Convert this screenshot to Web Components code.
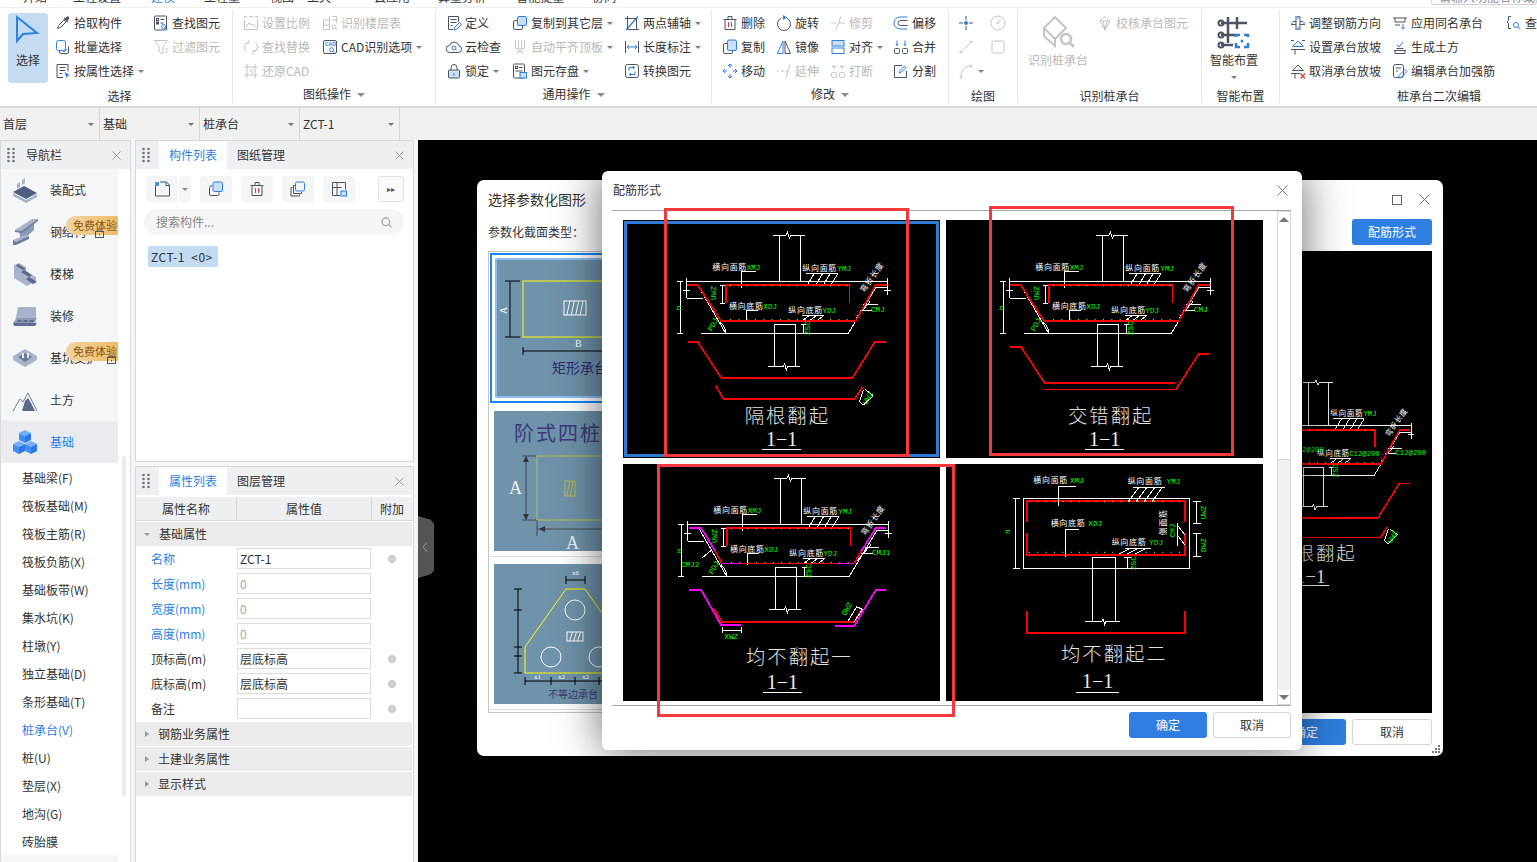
<!DOCTYPE html>
<html lang="zh-CN">
<head>
<meta charset="utf-8">
<title>GTJ</title>
<style>
html,body{margin:0;height:100%;overflow:hidden;background:#fff}
body{font:12px/16px "Noto Sans CJK SC","Liberation Sans",sans-serif;color:#333}
</style>
</head>
<body>
<gtj-app>
  <top-tabs></top-tabs>
  <ribbon-bar>
    <rb-group label="选择" style="--w:233px;--pad:8px;--cols:47px 98px 1fr;--label-w:239px">
      <rb-big icon="select" label="选择" active></rb-big>
      <rb-btn icon="pick" label="拾取构件"></rb-btn>
      <rb-btn icon="batch" label="批量选择"></rb-btn>
      <rb-btn icon="attrsel" label="按属性选择" drop></rb-btn>
      <rb-btn icon="findel" label="查找图元"></rb-btn>
      <rb-btn icon="filter" label="过滤图元" off></rb-btn>
    </rb-group>
    <rb-group label="图纸操作" drop style="--w:203px;--pad:10px;--cols:79px 1fr">
      <rb-btn icon="scale" label="设置比例" off></rb-btn>
      <rb-btn icon="replace" label="查找替换" off></rb-btn>
      <rb-btn icon="restore" label="还原CAD" off></rb-btn>
      <rb-btn icon="floortable" label="识别楼层表" off></rb-btn>
      <rb-btn icon="cadopt" label="CAD识别选项" drop></rb-btn>
    </rb-group>
    <rb-group label="通用操作" drop style="--w:276px;--pad:10px;--cols:66px 112px 1fr">
      <rb-btn icon="define" label="定义"></rb-btn>
      <rb-btn icon="cloud" label="云检查"></rb-btn>
      <rb-btn icon="lock" label="锁定" drop></rb-btn>
      <rb-btn icon="copyfloor" label="复制到其它层" drop></rb-btn>
      <rb-btn icon="autolevel" label="自动平齐顶板" drop off></rb-btn>
      <rb-btn icon="store" label="图元存盘" drop></rb-btn>
      <rb-btn icon="twoaxis" label="两点辅轴" drop></rb-btn>
      <rb-btn icon="dimlen" label="长度标注" drop></rb-btn>
      <rb-btn icon="convert" label="转换图元"></rb-btn>
    </rb-group>
    <rb-group label="修改" drop style="--w:237px;--pad:10px;--cols:54px 54px 63px 1fr">
      <rb-btn icon="del" label="删除"></rb-btn>
      <rb-btn icon="copy" label="复制"></rb-btn>
      <rb-btn icon="move" label="移动"></rb-btn>
      <rb-btn icon="rotate" label="旋转"></rb-btn>
      <rb-btn icon="mirror" label="镜像"></rb-btn>
      <rb-btn icon="extend" label="延伸" off></rb-btn>
      <rb-btn icon="trim" label="修剪" off></rb-btn>
      <rb-btn icon="align" label="对齐" drop></rb-btn>
      <rb-btn icon="brk" label="打断" off></rb-btn>
      <rb-btn icon="offset" label="偏移"></rb-btn>
      <rb-btn icon="merge" label="合并"></rb-btn>
      <rb-btn icon="split" label="分割"></rb-btn>
    </rb-group>
    <rb-group label="绘图" style="--w:69px;--pad:9px;--cols:32px 32px">
      <rb-btn icon="point"></rb-btn>
      <rb-btn icon="line" off></rb-btn>
      <rb-btn icon="arc" drop off></rb-btn>
      <rb-btn icon="gauge" off></rb-btn>
      <rb-btn icon="rect" off></rb-btn>
    </rb-group>
    <rb-group label="识别桩承台" style="--w:184px;--pad:10px;--cols:69px 1fr">
      <rb-big icon="identify" label="识别桩承台" off></rb-big>
      <rb-btn icon="check" label="校核承台图元" off></rb-btn>
    </rb-group>
    <rb-group label="智能布置" style="--w:78px;--pad:2px;--cols:60px">
      <rb-big icon="smart" label="智能布置" drop></rb-big>
    </rb-group>
    <rb-group label="桩承台二次编辑" last style="--w:257px;--pad:10px;--cols:102px 114px 1fr;--label-w:318px">
      <rb-btn icon="adjust" label="调整钢筋方向"></rb-btn>
      <rb-btn icon="slope" label="设置承台放坡"></rb-btn>
      <rb-btn icon="noslope" label="取消承台放坡"></rb-btn>
      <rb-btn icon="same" label="应用同名承台"></rb-btn>
      <rb-btn icon="earth" label="生成土方"></rb-btn>
      <rb-btn icon="patch" label="编辑承台加强筋"></rb-btn>
      <rb-btn icon="view" label="查看"></rb-btn>
    </rb-group>
  </ribbon-bar>
  <select-bar></select-bar>
  <main-area>
    <nav-panel>
      <nav-item icon="assembly" label="装配式"></nav-item>
      <nav-item icon="steel" label="钢结构" badge="29"></nav-item>
      <nav-item icon="stairs" label="楼梯"></nav-item>
      <nav-item icon="finish" label="装修"></nav-item>
      <nav-item icon="pit" label="基坑支护" badge="41"></nav-item>
      <nav-item icon="earthwork" label="土方"></nav-item>
      <nav-item icon="cubes" label="基础" active></nav-item>
      <sub-item>基础梁(F)</sub-item>
      <sub-item>筏板基础(M)</sub-item>
      <sub-item>筏板主筋(R)</sub-item>
      <sub-item>筏板负筋(X)</sub-item>
      <sub-item>基础板带(W)</sub-item>
      <sub-item>集水坑(K)</sub-item>
      <sub-item>柱墩(Y)</sub-item>
      <sub-item>独立基础(D)</sub-item>
      <sub-item>条形基础(T)</sub-item>
      <sub-item active>桩承台(V)</sub-item>
      <sub-item>桩(U)</sub-item>
      <sub-item>垫层(X)</sub-item>
      <sub-item>地沟(G)</sub-item>
      <sub-item>砖胎膜</sub-item>
    </nav-panel>
    <mid-column>
      <list-panel></list-panel>
      <prop-panel>
        <prop-group label="基础属性" open></prop-group>
        <prop-row label="名称" value="ZCT-1" blue dot></prop-row>
        <prop-row label="长度(mm)" value="0" blue dim></prop-row>
        <prop-row label="宽度(mm)" value="0" blue dim></prop-row>
        <prop-row label="高度(mm)" value="0" blue dim></prop-row>
        <prop-row label="顶标高(m)" value="层底标高" dot></prop-row>
        <prop-row label="底标高(m)" value="层底标高" dot></prop-row>
        <prop-row label="备注" value="" dot></prop-row>
        <prop-group label="钢筋业务属性"></prop-group>
        <prop-group label="土建业务属性"></prop-group>
        <prop-group label="显示样式"></prop-group>
      </prop-panel>
    </mid-column>
    <cad-canvas>
      <dock-handle></dock-handle>
      <param-dialog>
        <param-thumb kind="rect" selected></param-thumb>
        <param-thumb kind="step"></param-thumb>
        <param-thumb kind="poly"></param-thumb>
        <cad-drawing slot="preview" kind="1" vals style="width:301px;height:226px"></cad-drawing>
      </param-dialog>
      <rebar-dialog>
        <cad-drawing kind="1" selected></cad-drawing>
        <cad-drawing kind="2"></cad-drawing>
        <cad-drawing kind="3"></cad-drawing>
        <cad-drawing kind="4"></cad-drawing>
        <red-mark slot="mark" style="left:62px;top:37px;width:245px;height:249px"></red-mark>
        <red-mark slot="mark" style="left:387px;top:35px;width:245px;height:250px"></red-mark>
        <red-mark slot="mark" style="left:55px;top:293px;width:298px;height:253px"></red-mark>
      </rebar-dialog>
    </cad-canvas>
  </main-area>
</gtj-app>

<script>
const FONT = '"Noto Sans CJK SC","Liberation Sans",sans-serif';

// toolbar icons, 16x16 unless a vb attribute says otherwise
const ICONS = {
  select: '<path class="b" stroke-width="2" d="M3 2v24l6-7 14-1z"/>',
  pick: '<path d="M2.5 13.5l1-3 5.5-5.5 2 2-5.5 5.5z"/><path class="df" d="M8.5 3.5l4 4 1-1-1-1 1.3-1.3a1.6 1.6 0 0 0-2.3-2.3L10.200 3.200 9.500 2.500z"/>',
  batch: '<rect class="b" x="1.500" y="1.500" width="9" height="10" rx="2"/><path d="M4.500 11.500v1.500a1.500 1.500 0 0 0 1.500 1.500h6a1.500 1.500 0 0 0 1.500-1.500V7.500"/><path class="b" d="M7 11l2 2 3-3"/>',
  attrsel: '<path d="M8 14.500H2V1.500h11v7"/><path d="M4.500 4.500h6M4.500 7.500h6M4.500 10.500h3"/><path class="bf" d="M9.500 9l5.500 3-2.400.7-.9 2.500z"/>',
  findel: '<rect x="1.500" y="1" width="12" height="14" rx="1"/><path d="M7.500 4.500h4M7.500 8h3"/><rect x="3.500" y="3.500" width="2" height="2"/><rect x="3.500" y="7" width="2" height="2"/><circle class="b" cx="10.500" cy="11.500" r="2"/><path class="b" d="M12 13l2.500 2"/>',
  filter: '<path d="M1.500 1.500h13L10 7.500v7l-4-2v-5z"/><path d="M12 10h3M12 13h3"/>',
  scale: '<path d="M1.500 3V1.500H4M6 1.500h4M12 1.500h2.500V3M1.500 5v9.500h13V5"/><path d="M3 12l3-4 2.500 2.500L10 9l3 3"/>',
  floortable: '<path d="M1.500 5h6V1.500M1.500 10h6M7.500 5v9.500h-6V5M10.500 1.500h4V8M10.500 5h4"/><circle cx="12" cy="12" r="2"/><path d="M13.500 13.500l1.500 1.500"/>',
  replace: '<path d="M4 3.200a6 6 0 0 0-.5 9.300M12 12.800a6 6 0 0 0 .5-9.300"/><path d="M6 .8v3.600H2.500M10 15.200v-3.600h3.500"/>',
  cadopt: '<rect x="1.500" y="1.500" width="13" height="13" rx="1.500"/><text class="bf" x="3" y="7" font-size="5" font-family="Liberation Sans" font-weight="700">CAD</text><circle class="b" cx="9.500" cy="10.800" r="2"/><path class="b" d="M11 12.300l1.500 1.500"/>',
  restore: '<path d="M1 4h14M1 12h14M4 1v14M12 1v14"/><path d="M10 6L7 8l3 2"/>',
  define: '<path d="M12.500 7V1.500h-10v13H7"/><path d="M4.500 4.500h6M4.500 7.500h6M4.500 10.500h2"/><path class="b" d="M8 15l.5-2.500 5-5 2 2-5 5z"/>',
  cloud: '<path d="M4 13.500a3.500 3.500 0 0 1-.6-7A5 5 0 0 1 13 6.800a3.400 3.400 0 0 1-1 6.700z"/><circle class="b" cx="8" cy="9" r="2"/><path class="b" d="M9.500 10.500l1 1"/>',
  lock: '<rect class="lf" x="2.500" y="7" width="11" height="8" rx="1"/><path d="M5 7V4.500a3 3 0 0 1 6 0V7"/><path class="b" d="M8 10v2.500"/>',
  copyfloor: '<rect class="b lf" x="5.500" y="1.500" width="9" height="9" rx="1.500"/><path d="M5 5.500H3A1.500 1.500 0 0 0 1.500 7v6A1.500 1.500 0 0 0 3 14.500h6a1.500 1.500 0 0 0 1.500-1.500v-2"/>',
  autolevel: '<path d="M3.500 1.500v8h3v-8M9.500 1.500v8h3v-8"/><path d="M5 14.500L8 9.500l3 5M6 13h4"/>',
  store: '<rect x="1.500" y="1" width="11" height="14" rx="1"/><rect x="3.500" y="3.500" width="2" height="2"/><path d="M7 4.500h3.500M3.500 8h7"/><rect class="b lf" x="8" y="9.500" width="6.500" height="5.500"/>',
  twoaxis: '<path class="b" stroke-width="1.300" d="M2 15L14 1.500"/><path d="M3.500 1v13.500H15M1 3.500h11.500V15"/>',
  dimlen: '<path d="M1.500 2v12M14.500 2v12"/><path class="b" d="M3 8h10M5 6L3 8l2 2M11 6l2 2-2 2"/>',
  convert: '<rect x="1.500" y="1.500" width="13" height="13" rx="2"/><path class="b" d="M5 7.500V4.500h5.500M9 3l1.500 1.500L9 6M11 8.500v3H5.500M7 10L5.500 11.500 7 13"/>',
  del: '<path d="M3 4.500h10v10H3zM1.500 4.500h13M6 4.500V1.500h4v3"/><path class="r" d="M6.500 7v5M9.500 7v5"/>',
  rotate: '<path d="M10.500 3A6.500 6.500 0 1 1 5.500 3"/><path class="bf" d="M7 0l4 2.500L7 5z"/>',
  trim: '<path d="M1 8h5M8 8h7M11 1.500L6 14.500"/>',
  offset: '<path class="b" d="M14.500 2H7a6 6 0 0 0 0 12h7.500"/><path d="M14.500 5.500H7.500a2.500 2.500 0 0 0 0 5h7"/>',
  copy: '<rect class="b lf" x="5.500" y="1" width="9" height="10.500" rx="1.500"/><path d="M5 4.500H3A1.500 1.500 0 0 0 1.500 6v7A1.500 1.500 0 0 0 3 14.500h6a1.500 1.500 0 0 0 1.500-1.500v-1"/>',
  mirror: '<path class="b" d="M1.500 14.500L7 2v12.500z"/><path d="M9 14.500V2l5.500 12.500z"/>',
  align: '<rect class="b lf" x="2" y="1.500" width="12" height="5.500"/><rect class="b" x="2" y="9" width="12" height="5.500"/>',
  merge: '<rect x="1.500" y="9.500" width="5" height="5" rx="1"/><rect x="9.500" y="9.500" width="5" height="5" rx="1"/><path class="b" d="M4 1.500v5M2.800 5L4 6.500 5.200 5M12 1.500v5M10.800 5l1.200 1.500L13.200 5"/>',
  move: '<path class="b" d="M8 1v4M8 11v4M1 8h4M11 8h4M6 3l2-2 2 2M6 13l2 2 2-2M3 6L1 8l2 2M13 6l2 2-2 2"/>',
  extend: '<path d="M1 8h2M5 8h3M10 8h2M14 1.500L10 14.500"/>',
  brk: '<rect x="1.500" y="9.500" width="5" height="5" rx="1"/><rect x="9.500" y="9.500" width="5" height="5" rx="1"/><path d="M4 2v4M2 3.500h4M12 2v4M10 3.500h4"/>',
  split: '<path d="M9 2.500H1.500v12h12V8"/><path class="b" d="M6.500 10l.5-2.500L11.500 3 13 4.500 8.500 9z"/>',
  point: '<path d="M8 1v4M8 11v4M1 8h4M11 8h4"/><circle class="bf" cx="8" cy="8" r="2"/>',
  gauge: '<circle cx="8" cy="8" r="7"/><path d="M8 8l3-4"/><circle cx="8" cy="8" r=".8"/>',
  line: '<path d="M3 13L13 3"/><circle cx="2.800" cy="13.200" r="1"/><circle cx="13.200" cy="2.800" r="1"/>',
  rect: '<rect x="2" y="2" width="12" height="12" rx="1.500"/>',
  arc: '<path d="M3 14C3 7 7 3 13 3"/><circle cx="3" cy="14" r="1"/><circle cx="13" cy="3" r="1"/>',
  check: '<path d="M8 1.500l5 4.500-5 9-5-9zM3 6h10M6 6l2 9 2-9"/>',
  identify: '<path d="M14 2l11 11-11 11L3 13z" stroke-width="2"/><path d="M3 13v8l11 10v-7M14 31V24" stroke-width="2"/><circle cx="25" cy="24" r="5" stroke-width="2.500"/><path d="M29 28l4 4" stroke-width="2.500"/>',
  smart: '<path d="M4 8h26M4 20h14M11 2v26M20 2v12M4 30h12" stroke-width="2.500"/><circle cx="4" cy="8" r="2.500" stroke-width="2"/><circle cx="4" cy="20" r="2.500" stroke-width="2"/><circle cx="4" cy="30" r="2.500" stroke-width="2"/><path class="b" stroke-width="2.500" d="M19 22v-2h4M27 20h4v2M31 28v4h-4M23 32h-4v-4"/><circle class="bf" cx="25" cy="26" r="1.500"/>',
  adjust: '<path d="M3 6.500h3M10 6.500h3M1 9.500h5M10 9.500h5M6 1v14M10 1v14"/><path class="b" d="M8 1v3M6.500 2.500L8 1l1.500 1.500M8 15v-3M6.500 13.500L8 15l1.500-1.500M1 8h2M13 8h2"/>',
  slope: '<path class="b" d="M8 2l5.500 5.500h-11z"/><path d="M1 10.500h14M1 1.500h3M12 1.500h3M5 10.500v5"/>',
  noslope: '<path d="M8 2l5.500 5.500h-11zM1 10.500h9M5 10.500v5"/><path class="r" stroke-width="1.300" d="M10.500 10.500l4.500 5M15 10.500l-4.500 5"/>',
  same: '<path d="M1 3h14M3 3v4h10V3M3 10h5"/><path class="b" d="M11 9v5M9.500 12.500L11 14l1.500-1.500"/>',
  earth: '<path class="b" d="M5 6l2 2 4-5"/><path d="M2 11.500h12M3 11.500v3h10v-3M4.500 9.500h7"/>',
  patch: '<rect x="1.500" y="1.500" width="10" height="13" rx="2"/><path d="M4 5h5M4 8h2"/><path class="b" d="M6.500 15l.5-2.500 6-6 2 2-6 6z"/>',
  view: '<path d="M5 1.500H2.500v4L1 7l1.500 1.500v5H5"/><circle class="b" cx="10" cy="10" r="2.500"/><path class="b" d="M12 12l2 2.500"/>',
  newdoc: '<path d="M1.500 5v10h14V4l-3-3H6"/><path class="bf" d="M1 1h4v4H1z" opacity=".85"/><path d="M12 1v3.500h3.500"/>',
  dup: '<rect class="b lf" x="5" y="1" width="9.500" height="9.500" rx="1.500"/><path d="M4.500 5H3A1.500 1.500 0 0 0 1.500 6.500V13A1.500 1.500 0 0 0 3 14.500h6.500A1.500 1.500 0 0 0 11 13v-1.500"/>',
  dupmany: '<rect class="b" x="5.500" y="1" width="9" height="9" rx="1.500"/><path d="M5 4.500H3.500v8h8V11M2.500 6.500H1v8.500h8.500V13.500"/>',
  savetpl: '<path d="M1.500 1.500h13v7M1.500 1.500v13H9M1.500 6.500h9M6 1.500v13"/><rect class="b lf" x="10" y="10" width="5.500" height="5"/>'
};

const NAV = {
  assembly: '<path fill="#a8b3ca" d="M5 7l3-2v5L5 12zM10 3l3-2v5l-3 2z"/><path fill="#a8b3ca" d="M1 16l13 7 11-6v3l-11 6-13-7z"/><path fill="#4d5e80" d="M1 15l11-6 13 7-11 6z"/>',
  steel: '<path fill="#8e9ab5" d="M7 13L22 3v8L12 20l-3 0z"/><path fill="#a8b3ca" d="M3 11L20 0h6L10 12z"/><path fill="#6d7b9a" d="M3 11l7 1v2l-7-1zM10 12L26 0v2L10 14z"/><path fill="#a8b3ca" d="M1 21l12-5 4 1L4 23z"/><path fill="#6d7b9a" d="M1 21l3 2v3H1zM4 23l13-6v3L4 26z"/>',
  stairs: '<path fill="#a8b3ca" d="M2 4l0 13 13 8 9-5v-4L14 10V6L7 2z"/><path fill="#596a8b" d="M6 3l8 5-3 1-7-4zM12 9l8 5-3 2-8-5zM17 16l8 5-4 2-7-5z"/>',
  finish: '<path fill="#a8b3ca" d="M7 4h17v15H3l3-15z"/><path fill="#8d99b4" d="M1 20h21l3-5H5z"/><path fill="#5d6d8e" d="M5 19h4l1-2H6zM11 19h4l1-2h-4zM17 19h4l1-2h-4zM7 23h16l2-3H1l1 3z"/>',
  pit: '<path fill="#a8b3ca" d="M13 4L1 11v4l12 7 12-7v-4z"/><path fill="#6d7b9a" d="M13 8l-7 4 7 5 7-5z"/><path fill="#e8eaf0" d="M10 8h2v5h-2zM15 8h2v5h-2z"/>',
  earthwork: '<path fill="none" stroke="#6d7b9a" d="M1 24L8 12l3 3 5-9 9 18"/><path fill="#59698b" d="M10 24l3-10 3-3 3 5 4 8z"/>',
  cubes: '<g id="c"><path fill="#6fb0ff" d="M13 1l6 3-6 3-6-3z"/><path fill="#3f8ff2" d="M7 4l6 3v7l-6-3z"/><path fill="#2b78e4" d="M19 4l-6 3v7l6-3z"/></g><path fill="#6fb0ff" d="M7 12l6 3-6 3-6-3z"/><path fill="#3f8ff2" d="M1 15l6 3v7l-6-3z"/><path fill="#2b78e4" d="M13 15l-6 3v7l6-3z"/><path fill="#6fb0ff" d="M19 12l6 3-6 3-6-3z"/><path fill="#3f8ff2" d="M13 15l6 3v7l-6-3z"/><path fill="#2b78e4" d="M25 15l-6 3v7l6-3z"/>'
};

class ToolIcon extends HTMLElement {
  connectedCallback() {
    if (this.shadowRoot) return;
    const vb = this.getAttribute("vb") || 16;
    const size = this.getAttribute("size") || 16;
    const root = this.attachShadow({ mode: "open" });
    root.innerHTML = `
      <style>
        :host { display: inline-flex; flex: none; width: ${size}px; height: ${size}px; }
        svg { width: 100%; height: 100%; fill: none; stroke: var(--ic, #4b5462); stroke-width: 1; overflow: visible; }
        .b { stroke: var(--acc, #2d7fe0); }
        .lf { fill: var(--lt, #c9dff8); }
        .bf { fill: var(--acc, #2d7fe0); stroke: none; }
        .df { fill: var(--ic, #4b5462); stroke: none; }
        .r { stroke: var(--red, #e23b3b); }
      </style>
      <svg viewBox="0 0 ${vb} ${vb}">${ICONS[this.getAttribute("name")] || ""}</svg>`;
  }
}
customElements.define("tool-icon", ToolIcon);

class GtjApp extends HTMLElement {
  constructor() {
    super();
    this.attachShadow({ mode: "open" }).innerHTML = `
      <style>
        :host { display: flex; flex-direction: column; width: 100vw; height: 100vh; overflow: hidden; }
      </style>
      <slot></slot>`;
  }
}
customElements.define("gtj-app", GtjApp);

class TopTabs extends HTMLElement {
  constructor() {
    super();
    const tabs = [["开始", 23, 0], ["工程设置", 73, 0], ["建模", 151, 1], ["工程量", 204, 0], ["视图", 270, 0], ["工具", 307, 0], ["云应用", 374, 0], ["算量分析", 438, 0], ["智能提量", 516, 0], ["协同", 592, 0]];
    let prev = 0;
    const html = tabs.map(([t, x, on]) => {
      const m = x - prev;
      prev = x + t.length * 12;
      return `<span class="${on ? "on" : ""}" style="margin-left:${m}px">${t}</span>`;
    }).join("");
    this.attachShadow({ mode: "open" }).innerHTML = `
      <style>
        :host { display: flex; flex: none; height: 8px; overflow: hidden; box-sizing: border-box; border-bottom: 1px solid #efefef; position: relative; }
        span { display: block; margin-top: -11px; height: 18px; line-height: 16px; flex: none; }
        .on { color: #2d7fe0; box-shadow: 0 2px 0 #2d7fe0; padding: 0 3px; margin-right: -6px; transform: translateX(-3px); }
        .search { margin: -11px 0 0 auto; width: 106px; height: 16px; box-sizing: border-box; border: 1px solid #cfcfcf; border-radius: 3px; padding-left: 7px; white-space: nowrap; overflow: hidden; color: #888; line-height: 14px; }
      </style>
      ${html}<div class="search">请输入功能名称或关键字</div>`;
  }
}
customElements.define("top-tabs", TopTabs);

class RibbonBar extends HTMLElement {
  constructor() {
    super();
    this.attachShadow({ mode: "open" }).innerHTML = `
      <style>
        :host { display: flex; flex: none; height: 100px; box-sizing: border-box; background: #fff; border-bottom: 2px solid #d8d8d8; overflow: hidden; }
      </style>
      <slot></slot>`;
  }
}
customElements.define("ribbon-bar", RibbonBar);

class RbGroup extends HTMLElement {
  connectedCallback() {
    if (this.shadowRoot) return;
    const drop = this.hasAttribute("drop");
    this.attachShadow({ mode: "open" }).innerHTML = `
      <style>
        :host { display: flex; flex: none; flex-direction: column; box-sizing: border-box; width: var(--w); height: 93px; margin-top: 2px; padding-top: 1px; border-right: 1px solid #e6e6e6; }
        :host([last]) { border-right: 0; }
        .body { display: grid; height: 72px; padding-left: var(--pad); grid-template-columns: var(--cols); grid-template-rows: repeat(3, 24px); grid-auto-flow: column; }
        .label { text-align: center; margin-top: ${drop ? 3 : 5}px; width: var(--label-w, auto); }
        .label i { display: inline-block; margin-left: 6px; vertical-align: 2px; border: 4px solid transparent; border-top: 4px solid #8a8a8a; border-bottom: 0; }
      </style>
      <div class="body"><slot></slot></div>
      <div class="label">${this.getAttribute("label")}${drop ? "<i></i>" : ""}</div>`;
  }
}
customElements.define("rb-group", RbGroup);

class RbBtn extends HTMLElement {
  connectedCallback() {
    if (this.shadowRoot) return;
    const label = this.getAttribute("label");
    this.attachShadow({ mode: "open" }).innerHTML = `
      <style>
        :host { display: flex; align-items: center; gap: 3px; height: 24px; white-space: nowrap; color: #333; }
        :host([off]) { color: #b8b8b8; --ic: #c4c4c4; --acc: #c4c4c4; --lt: transparent; --red: #c4c4c4; }
        i { flex: none; margin-left: 1px; border: 3px solid transparent; border-top: 3px solid #7d7d7d; border-bottom: 0; }
      </style>
      <tool-icon name="${this.getAttribute("icon")}"></tool-icon>${label ? `<span>${label}</span>` : ""}${this.hasAttribute("drop") ? "<i></i>" : ""}`;
  }
}
customElements.define("rb-btn", RbBtn);

class RbBig extends HTMLElement {
  connectedCallback() {
    if (this.shadowRoot) return;
    const icon = this.getAttribute("icon");
    const size = icon === "select" ? 28 : 34;
    this.attachShadow({ mode: "open" }).innerHTML = `
      <style>
        :host { grid-row: span 3; display: flex; flex-direction: column; align-items: center; width: 60px; height: 70px; margin-top: 2px; padding-top: 2px; box-sizing: border-box; white-space: nowrap; color: #333; }
        :host([active]) { width: 40px; background: #c5dbf2; border-radius: 3px; }
        :host([off]) { color: #b8b8b8; --ic: #c4c4c4; --acc: #c4c4c4; }
        tool-icon { margin-bottom: ${icon === "select" ? 9 : 3}px; }
        i { margin-top: 8px; border: 3px solid transparent; border-top: 3px solid #7d7d7d; border-bottom: 0; }
      </style>
      <tool-icon name="${icon}" vb="${size}" size="${size}"></tool-icon>
      <span>${this.getAttribute("label")}</span>${this.hasAttribute("drop") ? "<i></i>" : ""}`;
  }
}
customElements.define("rb-big", RbBig);

class SelectBar extends HTMLElement {
  constructor() {
    super();
    const cells = ["首层", "基础", "桩承台", "ZCT-1"].map(t => `<div>${t}<i></i></div>`).join("");
    this.attachShadow({ mode: "open" }).innerHTML = `
      <style>
        :host { display: flex; flex: none; height: 32px; background: #f0f0f0; }
        div { width: 100px; box-sizing: border-box; display: flex; align-items: center; justify-content: space-between; padding: 0 5px 0 3px; border-right: 1px solid #d6d6d6; }
        i { border: 3px solid transparent; border-top: 3px solid #777; border-bottom: 0; }
      </style>
      ${cells}`;
  }
}
customElements.define("select-bar", SelectBar);

class MainArea extends HTMLElement {
  constructor() {
    super();
    this.attachShadow({ mode: "open" }).innerHTML = `
      <style>
        :host { display: flex; flex: 1; min-height: 0; gap: 4px; background: #f6f6f6; }
      </style>
      <slot></slot>`;
  }
}
customElements.define("main-area", MainArea);

class PanelHead extends HTMLElement {
  connectedCallback() {
    if (this.shadowRoot) return;
    const tabs = (this.getAttribute("tabs") || "").split(",");
    const title = this.getAttribute("title-text");
    const dots = [0, 1, 2, 3].map(r => `<circle cx="2.500" cy="${2 + r * 4}" r="1.300"/><circle cx="7.500" cy="${2 + r * 4}" r="1.300"/>`).join("");
    this.attachShadow({ mode: "open" }).innerHTML = `
      <style>
        :host { display: flex; flex: none; align-items: center; height: 28px; background: #eeeff1; padding-left: 5px; padding-right: 9px; }
        .grip { width: 10px; height: 16px; fill: #6d7380; flex: none; }
        .title { margin-left: 10px; }
        .tab { width: 68px; height: 28px; line-height: 28px; text-align: center; }
        .tab.on { background: #fff; color: #2d7fe0; margin-left: 8px; }
        .tab.off { text-align: left; margin-left: 10px; }
        .x { margin-left: auto; width: 9px; height: 9px; stroke: #9a9a9a; fill: none; }
      </style>
      <svg class="grip" viewBox="0 0 10 16">${dots}</svg>
      ${title ? `<span class="title">${title}</span>` : tabs.map((t, i) => `<div class="tab ${i ? "off" : "on"}">${t}</div>`).join("")}
      <svg class="x" viewBox="0 0 9 9"><path d="M.5.5l8 8M8.500.5l-8 8"/></svg>`;
  }
}
customElements.define("panel-head", PanelHead);

class NavPanel extends HTMLElement {
  constructor() {
    super();
    this.attachShadow({ mode: "open" }).innerHTML = `
      <style>
        :host { display: flex; flex: none; flex-direction: column; width: 131px; box-sizing: border-box; border: 1px solid #d8d8d8; border-width: 1px 1px 0 1px; background: #fff; overflow: hidden; }
        .body { display: flex; flex: 1; min-height: 0; }
        .list { width: 117px; flex: none; background: #fff; }
        .next { height: 10px; background: #f5f6f8; }
        .thumb { width: 4px; height: 340px; margin: 287px 0 0 4px; background: #ececec; border-radius: 2px; }
      </style>
      <panel-head title-text="导航栏"></panel-head>
      <div class="body">
        <div class="list"><slot></slot><div class="next"></div></div>
        <div class="thumb"></div>
      </div>`;
  }
}
customElements.define("nav-panel", NavPanel);

class NavItem extends HTMLElement {
  connectedCallback() {
    if (this.shadowRoot) return;
    const badge = this.getAttribute("badge");
    this.attachShadow({ mode: "open" }).innerHTML = `
      <style>
        :host { display: flex; align-items: center; position: relative; height: 42px; background: #f5f6f8; padding-left: 11px; color: #333; }
        :host([active]) { background: #e9ebef; color: #2d7fe0; }
        svg { width: 26px; height: 26px; flex: none; margin-right: 12px; }
        .badge { position: absolute; left: 65px; top: 5px; width: 52px; height: 19px; box-sizing: border-box; padding-left: 7px; font-size: 11px; line-height: 18px; background: linear-gradient(90deg,#f2d3a0,#ecbd68); border-radius: 10px 0 0 10px; color: #8a560f; white-space: nowrap; overflow: hidden; }
        .lock { position: absolute; top: 18px; width: 9px; height: 9px; margin: 0; fill: none; stroke: #555; }
      </style>
      <svg viewBox="0 0 26 26">${NAV[this.getAttribute("icon")]}</svg>
      <span>${this.getAttribute("label")}</span>
      ${badge ? `<div class="badge">免费体验</div><svg class="lock" style="left:${+badge + 65}px" viewBox="0 0 9 9"><rect x=".5" y="2.500" width="8" height="6"/><path d="M2.500 2.500c0-2.500 4-2.500 4 0"/><path d="M4.500 5v1.500"/></svg>` : ""}`;
  }
}
customElements.define("nav-item", NavItem);

class SubItem extends HTMLElement {
  constructor() {
    super();
    this.attachShadow({ mode: "open" }).innerHTML = `
      <style>
        :host { display: flex; align-items: center; height: 28px; box-sizing: border-box; padding: 2px 0 0 21px; background: #fff; color: #333; }
        :host([active]) { color: #2d7fe0; }
      </style>
      <slot></slot>`;
  }
}
customElements.define("sub-item", SubItem);

class MidColumn extends HTMLElement {
  constructor() {
    super();
    this.attachShadow({ mode: "open" }).innerHTML = `
      <style>
        :host { display: flex; flex: none; flex-direction: column; gap: 4px; width: 279px; }
      </style>
      <slot></slot>`;
  }
}
customElements.define("mid-column", MidColumn);

class ListPanel extends HTMLElement {
  constructor() {
    super();
    const btn = (n, w) => `<div class="tb" style="width:${w || 32}px"><tool-icon name="${n}"></tool-icon></div>`;
    this.attachShadow({ mode: "open" }).innerHTML = `
      <style>
        :host { display: flex; flex: none; flex-direction: column; height: 322px; box-sizing: border-box; border: 1px solid #d8d8d8; background: #fff; }
        .bar { display: flex; gap: 9px; padding: 7px 9px 0 10px; }
        .tb { display: flex; align-items: center; justify-content: center; height: 26px; background: #f5f5f5; border-radius: 3px; }
        .split { display: flex; gap: 1px; }
        .caret { width: 12px; }
        .caret i { border: 3px solid transparent; border-top: 3px solid #888; border-bottom: 0; }
        .more { margin-left: auto; width: 26px; box-sizing: border-box; border: 1px solid #e2e2e2; background: #fafafa; font-size: 8px; color: #555; }
        .search { display: flex; align-items: center; justify-content: space-between; height: 26px; margin: 7px 9px 0 8px; padding: 0 12px; background: #f5f5f5; border-radius: 13px; color: #888; }
        .search svg { width: 11px; height: 11px; fill: none; stroke: #aaa; stroke-width: 1.300; }
        .chip { align-self: flex-start; margin: 11px 0 0 12px; width: 70px; height: 21px; line-height: 21px; box-sizing: border-box; padding-left: 3px; background: #c2daf2; border-radius: 2px; white-space: pre; letter-spacing: .5px; }
      </style>
      <panel-head tabs="构件列表,图纸管理"></panel-head>
      <div class="bar">
        <div class="split">${btn("newdoc")}<div class="tb caret"><i></i></div></div>
        ${btn("dup")}${btn("del")}${btn("dupmany")}${btn("savetpl")}
        <div class="tb more">▸▸</div>
      </div>
      <div class="search"><span>搜索构件...</span><svg viewBox="0 0 11 11"><circle cx="4.800" cy="4.800" r="3.800"/><path d="M7.500 7.500l3 3"/></svg></div>
      <div class="chip">ZCT-1  &lt;0&gt;</div>`;
  }
}
customElements.define("list-panel", ListPanel);

class PropPanel extends HTMLElement {
  constructor() {
    super();
    this.attachShadow({ mode: "open" }).innerHTML = `
      <style>
        :host { display: flex; flex: 1; min-height: 0; flex-direction: column; box-sizing: border-box; border: 1px solid #d8d8d8; border-bottom: 0; background: #fff; overflow: hidden; }
        .head { display: grid; grid-template-columns: 100px 1px 134px 1px 40px; flex: none; box-sizing: border-box; height: 24px; margin-top: 2px; line-height: 23px; background: #eeeff1; text-align: center; border-bottom: 1px solid #dcdcdc; }
        .head b { background: #d4d4d4; }
      </style>
      <panel-head tabs="属性列表,图层管理"></panel-head>
      <div class="head"><span>属性名称</span><b></b><span>属性值</span><b></b><span>附加</span></div>
      <slot></slot>`;
  }
}
customElements.define("prop-panel", PropPanel);

class PropGroup extends HTMLElement {
  connectedCallback() {
    if (this.shadowRoot) return;
    const open = this.hasAttribute("open");
    this.attachShadow({ mode: "open" }).innerHTML = `
      <style>
        :host { display: flex; align-items: center; flex: none; height: 24px; margin-top: 1px; width: 276px; background: #ebebeb; padding-left: 8px; box-sizing: border-box; }
        i { width: 0; height: 0; margin-right: 9px; margin-left: ${open ? 0 : 1}px; border: 3px solid transparent;
            ${open ? "border-top: 3px solid #999; border-bottom: 0; border-left-width: 3px;" : "border-left: 4px solid #999; border-right: 0;"} }
      </style>
      <i></i><span>${this.getAttribute("label")}</span>`;
  }
}
customElements.define("prop-group", PropGroup);

class PropRow extends HTMLElement {
  connectedCallback() {
    if (this.shadowRoot) return;
    this.attachShadow({ mode: "open" }).innerHTML = `
      <style>
        :host { display: grid; grid-template-columns: 101px 134px 41px; align-items: center; flex: none; height: 25px; }
        .k { padding-left: 15px; }
        :host([blue]) .k { color: #2d7fe0; }
        .v { height: 21px; line-height: 19px; box-sizing: border-box; border: 1px solid #dcdcdc; padding-left: 2px; }
        :host([dim]) .v { color: #a8a8a8; }
        .d { justify-self: center; width: 8px; height: 8px; border-radius: 50%; background: #d2d2d2; border: 1px solid #c0c0c0; box-sizing: border-box; }
      </style>
      <span class="k">${this.getAttribute("label")}</span>
      <div class="v">${this.getAttribute("value")}</div>
      ${this.hasAttribute("dot") ? '<div class="d"></div>' : ""}`;
  }
}
customElements.define("prop-row", PropRow);

class CadCanvas extends HTMLElement {
  constructor() {
    super();
    this.attachShadow({ mode: "open" }).innerHTML = `
      <style>
        :host { display: block; flex: 1; min-width: 0; position: relative; background: #000; overflow: hidden; }
      </style>
      <slot></slot>`;
  }
}
customElements.define("cad-canvas", CadCanvas);

class DockHandle extends HTMLElement {
  constructor() {
    super();
    this.attachShadow({ mode: "open" }).innerHTML = `
      <style>
        :host { position: absolute; left: 0; top: 376px; width: 16px; height: 62px; display: flex; align-items: center; justify-content: center; background: #555; clip-path: polygon(0 0, 80% 6%, 100% 12%, 100% 88%, 80% 94%, 0 100%); }
        svg { width: 6px; height: 10px; fill: none; stroke: #9a9a9a; margin-right: 2px; }
      </style>
      <svg viewBox="0 0 6 10"><path d="M5 .5L1 5l4 4.500"/></svg>`;
  }
}
customElements.define("dock-handle", DockHandle);

const WIN_BTN = `
  .blue, .plain { display: flex; align-items: center; justify-content: center; width: 78px; height: 26px; box-sizing: border-box; border-radius: 3px; }
  .blue { background: #2e7fe0; color: #fff; }
  .plain { background: #fff; border: 1px solid #d4d4d4; }`;

class ParamDialog extends HTMLElement {
  constructor() {
    super();
    this.attachShadow({ mode: "open" }).innerHTML = `
      <style>
        :host { position: absolute; left: 59px; top: 40px; width: 966px; height: 576px; box-sizing: border-box; display: flex; flex-direction: column; padding: 0 11px; background: #fff; border-radius: 7px; }
        ${WIN_BTN}
        .head { display: flex; align-items: center; height: 39px; font-size: 14px; flex: none; }
        .head .t { margin-bottom: 2px; }
        .win { margin-left: auto; margin-right: 2px; display: flex; gap: 17px; align-items: center; stroke: #666; fill: none; }
        .row { display: flex; align-items: center; justify-content: space-between; height: 26px; flex: none; }
        .row .blue { width: 80px; }
        .body { display: flex; height: 462px; margin-top: 6px; flex: none; }
        .list { width: 212px; flex: none; box-sizing: border-box; border: 1px solid #c4c4c4; padding-top: 1px; overflow: hidden; }
        .prev { flex: 1; min-width: 0; margin-left: 0; background: #000; overflow: hidden; padding: 117px 0 0 460px; box-sizing: border-box; }
        .foot { display: flex; justify-content: flex-end; gap: 6px; margin-top: 6px; flex: none; }
        .foot div { width: 80px; }
        .grip { position: absolute; right: 2px; bottom: 2px; width: 9px; height: 9px; fill: #777; }
      </style>
      <div class="head"><span class="t">选择参数化图形</span>
        <div class="win">
          <svg width="10" height="10"><rect x=".5" y=".5" width="9" height="9"/></svg>
          <svg width="11" height="11"><path d="M.5.5l10 10M10.500.5l-10 10"/></svg>
        </div>
      </div>
      <div class="row"><span>参数化截面类型：</span><div class="blue">配筋形式</div></div>
      <div class="body">
        <div class="list"><slot></slot></div>
        <div class="prev"><slot name="preview"></slot></div>
      </div>
      <div class="foot"><div class="blue">确定</div><div class="plain">取消</div></div>
      <svg class="grip" viewBox="0 0 9 9"><rect x="6" y="0" width="2" height="2"/><rect x="3" y="3" width="2" height="2"/><rect x="6" y="3" width="2" height="2"/><rect x="0" y="6" width="2" height="2"/><rect x="3" y="6" width="2" height="2"/><rect x="6" y="6" width="2" height="2"/></svg>`;
  }
}
customElements.define("param-dialog", ParamDialog);

class ParamThumb extends HTMLElement {
  connectedCallback() {
    if (this.shadowRoot) return;
    const hatch = (x, y, w, h, c) => {
      const n = Math.max(1, Math.floor(w / 5));
      const s = w / (n + 1);
      let d = "";
      for (let i = 1; i <= n; i++) d += `M${x + s * i - 1.500} ${y + h}L${x + s * i + 1.500} ${y}`;
      return `<rect x="${x}" y="${y}" width="${w}" height="${h}" fill="none" stroke="${c}"/><path stroke="${c}" d="${d}"/>`;
    };
    const kinds = {
      rect: `<rect x="26" y="21" width="110" height="56" fill="none" stroke="#ff0"/>${hatch(67, 41, 22, 14, "#fff")}
        <path stroke="#000" fill="none" d="M13 21v56M8 21h15M8 77h15M26 87v8M26 91h110"/>
        <text transform="rotate(-90 10 54)" x="10" y="54" fill="#fff" font-size="10" font-family="Liberation Serif">A</text>
        <text x="78" y="87" fill="#fff" font-size="10" font-family="Liberation Serif">B</text>
        <text x="55" y="113" fill="#2c2c74" font-size="14" font-family="Noto Sans CJK SC">矩形承台</text>`,
      step: `<text x="20" y="30" fill="#3b3b7a" font-size="20" letter-spacing="2" font-family="Noto Sans CJK SC">阶式四桩台</text>
        <rect x="43" y="45" width="110" height="64" fill="none" stroke="#b9b94f"/>${hatch(71, 70, 10, 15, "#b9b94f")}
        <path stroke="#3e4a52" fill="none" d="M28 45h14M28 109h14M32 47v60M43 109v16M43 118h110"/>
        <path fill="#333" d="M32 45l-3 6h6zM32 109l-3-6h6zM45 118l6-3v6z"/>
        <text x="15" y="83" fill="#eee" font-size="18" font-family="Liberation Serif">A</text>
        <text x="72" y="138" fill="#eee" font-size="18" font-family="Liberation Serif">A</text>`,
      poly: `<path fill="none" stroke="#ff0" d="M31 109V83L72 25h19l41 58v26z"/>
        <g fill="none" stroke="#fff"><circle cx="81" cy="46" r="10"/><circle cx="57" cy="93" r="10"/><circle cx="105" cy="93" r="10"/></g>${hatch(73, 68, 16, 9, "#fff")}
        <path stroke="#000" fill="none" d="M24 25v84M20 25h8M20 46h8M20 83h8M20 92h8M20 109h8M31 117h100M31 113v8M57 113v8M81 113v8M105 113v8M72 16h19M72 12v8M91 12v8"/>
        <g fill="#fff" font-size="7" font-family="Liberation Serif"><text x="78" y="11">x6</text><text x="40" y="115">x1</text><text x="64" y="115">x2</text><text x="88" y="115">x2</text></g>
        <text x="54" y="134" fill="#3b3b7a" font-size="10" font-family="Noto Sans CJK SC">不等边承台</text>`
    };
    this.attachShadow({ mode: "open" }).innerHTML = `
      <style>
        :host { display: block; box-sizing: border-box; height: 150px; margin-bottom: 3px; padding: 5px; position: relative; }
        :host([selected]) { padding: 3px; border: 2px solid #1587f5; margin-left: 1px; }
        :host(:not([selected])) { box-shadow: 0 2px 0 -1px #ddd; }
        :host([selected]) .in { border: 2px solid #8ebcf3; }
        .in { height: 140px; }
        :host([selected]) .in { height: 136px; }
        svg { display: block; width: 100%; height: 100%; background: #6f93aa; }
      </style>
      <div class="in"><svg>${kinds[this.getAttribute("kind")]}</svg></div>`;
  }
}
customElements.define("param-thumb", ParamThumb);

class RebarDialog extends HTMLElement {
  constructor() {
    super();
    this.attachShadow({ mode: "open" }).innerHTML = `
      <style>
        :host { position: absolute; left: 184px; top: 31px; width: 700px; height: 579px; box-sizing: border-box; display: flex; flex-direction: column; padding: 0 11px 0 10px; background: #fff; border-radius: 6px; box-shadow: 0 0 45px rgba(0,0,0,.6); }
        ${WIN_BTN}
        .head { display: flex; align-items: center; justify-content: space-between; height: 39px; flex: none; font-size: 12px; padding: 0 2px 0 1px; }
        .head span { margin-bottom: 2px; }
        .head svg { stroke: #777; fill: none; margin-right: 1px; }
        .box { display: flex; height: 496px; flex: none; box-sizing: border-box; border: 1px solid #a4a7ab; border-width: 1px 0 1px 0; }
        .grid { flex: 1; min-width: 0; display: grid; grid-template-columns: 317px 317px; grid-template-rows: 238px 237px; gap: 6px; padding: 9px 0 0 11px; box-sizing: border-box; }
        .sb { flex: none; width: 14px; display: flex; flex-direction: column; background: #f0f0f0; border: 1px solid #d8d8d8; box-sizing: border-box; }
        .arr { height: 14px; background: #fff; display: flex; align-items: center; justify-content: center; flex: none; }
        .arr i { border: 5px solid transparent; border-width: 0 5px 5px 5px; border-bottom-color: #777; }
        .arr.dn i { border-width: 5px 5px 0 5px; border-top-color: #777; border-bottom-color: transparent; }
        .th { height: 233px; background: #fff; border-bottom: 1px solid #d8d8d8; flex: none; }
        .fill { flex: 1; }
        .foot { display: flex; justify-content: flex-end; gap: 6px; padding-top: 6px; flex: none; }
      </style>
      <div class="head"><span>配筋形式</span><svg width="11" height="11"><path d="M.5.5l10 10M10.500.5l-10 10"/></svg></div>
      <div class="box">
        <div class="grid"><slot></slot></div>
        <div class="sb"><div class="arr"><i></i></div><div class="th"></div><div class="fill"></div><div class="arr dn"><i></i></div></div>
      </div>
      <div class="foot"><div class="blue">确定</div><div class="plain">取消</div></div>
      <slot name="mark"></slot>`;
  }
}
customElements.define("rebar-dialog", RebarDialog);

class RedMark extends HTMLElement {
  constructor() {
    super();
    this.attachShadow({ mode: "open" }).innerHTML = `
      <style>
        :host { position: absolute; box-sizing: border-box; border: 3px solid #f3393c; }
      </style>`;
  }
}
customElements.define("red-mark", RedMark);

// section drawings of the rebar forms, coordinates are in thirds of a pixel
class CadDrawing extends HTMLElement {
  connectedCallback() {
    if (this.shadowRoot) return;
    const kind = this.getAttribute("kind");
    const vals = this.hasAttribute("vals");
    const view = { 1: "24 45 951 714", 2: "3 45 951 714", 3: "24 12 951 711", 4: "3 12 951 711" }[kind];
    const body = { 1: this.formOne(vals), 2: this.formTwo(), 3: this.formThree(), 4: this.formFour() }[kind];
    this.attachShadow({ mode: "open" }).innerHTML = `
      <style>
        :host { display: block; background: #000; overflow: hidden; }
        :host([selected]) { outline: 3px solid #2e7bd6; outline-offset: -4px; }
        svg { display: block; width: 100%; height: 100%; }
        .w { fill: none; stroke: #fff; stroke-width: 3; shape-rendering: crispEdges; }
        .red { fill: none; stroke: #f00; stroke-width: 5; shape-rendering: crispEdges; }
        .mg { fill: none; stroke: #f0f; stroke-width: 5; shape-rendering: crispEdges; }
        .dots { fill: none; stroke: #ff0; stroke-width: 3; stroke-dasharray: 3 22; }
        .lb { fill: #fff; font: 24px ${FONT}; letter-spacing: 2px; }
        .gn { fill: #0f0; font: 23px "Liberation Mono", monospace; }
        .ti { fill: #e2e2e2; font: 300 58px ${FONT}; letter-spacing: 6px; }
        .no { fill: #eee; font: 60px "Liberation Serif", serif; }
      </style>
      <svg viewBox="${view}">${body}</svg>`;
  }

  lb(x, y, t) { return `<text class="lb" x="${x}" y="${y}">${t}</text>`; }
  gn(x, y, t, rot) { return `<text class="gn" x="${x}" y="${y}"${rot ? ` transform="rotate(${rot} ${x} ${y})"` : ""}>${t}</text>`; }

  title(t, x, y, noX, noY, lineA, lineB, lineY) {
    return `<text class="ti" x="${x}" y="${y}" text-anchor="middle">${t}</text>
      <text class="no" x="${noX}" y="${noY}" text-anchor="middle">1−1</text>
      <path class="w" d="M${lineA} ${lineY}H${lineB}"/>`;
  }

  // the part the first three forms share: pier, cap outline, leaders and labels
  upper(o) {
    const v = o.vals;
    return `<g transform="translate(${o.dx} ${o.dy})">
      <polyline class="w" points="475,90 513,90 517,82 523,100 527,90 570,90"/>
      <path class="w" d="M493 90V228M556 90V228M215 228H818M215 218V280M818 218V270"/>
      <path class="w" d="M185 228H205M185 385H205M195 228V385M203 256H226M808 256H828M215 280H265"/>
      <path class="w" d="M248 240L332 385M258 385H700L782 248H818M745 298H790M735 316H770M722 340L765 290"/>
      <path class="w" d="M378 198H422M378 198V250M572 205H668M597 207L575 243M622 207L600 243M645 207L623 243M668 207L646 243"/>
      <path class="w" d="M322 240V296M315 240H330M315 296H330M395 315H430M395 315V352M560 332H625M582 332L560 348M604 332L582 348M626 332L604 348"/>
      <path class="w" d="M478 484V358H541V484M460 484H505L509 476L514 494L518 484H555M565 358V385M558 358H572M558 385H572"/>
      <path class="w" d="M315 350Q332 365 332 385"/>
      ${o.noRed ? "" : `<polyline class="red" points="215,240 248,240 318,348 722,348 782,240 815,240"/>`}
      <polyline class="red" points="332,293 332,240 703,240 703,293"/>
      <path class="dots" d="M345 242H700M345 344H700"/>
      <path fill="none" stroke="#f0f" stroke-width="3" stroke-dasharray="3 9" d="M720 330L745 288"/>
      ${this.lb(292, 195, "横向面筋")}${this.gn(395, 195, "XMJ")}
      ${this.lb(562, 197, "纵向面筋")}${this.gn(667, 197, "YMJ")}
      ${this.lb(342, 311, "横向底筋")}${this.gn(445, 311, v ? "C12@200" : "XDJ")}
      ${this.lb(520, 324, "纵向底筋")}${this.gn(622, 324, v ? "C12@200" : "YDJ")}
      ${this.gn(304, 285, "UWZ", -90)}${this.gn(199, 316, "h", -90)}
      ${this.gn(585, 390, "ZSC", -90)}${this.gn(290, 380, "PDJ", -60)}
      ${o.cm === false ? "" : this.gn(768, 320, v ? "C12@200" : "CMJ")}
      <text class="lb" x="748" y="264" transform="rotate(-55 748 264)">弯折长度</text>
    </g>`;
  }

  formOne(vals) {
    return `${this.upper({ dx: 0, dy: 0, vals })}
      <polyline class="red" points="218,410 248,410 318,518 713,518 780,410 812,410"/>
      <polyline class="red" points="302,542 325,581 720,581 742,547"/>
      <path class="w" d="M745 555L733 590M775 572L745 600M750 553L775 572M733 590L745 600"/>
      ${this.gn(755, 600, "UWZ", -60)}
      ${this.title("隔根翻起", 517, 653, 500, 724, 442, 557, 733)}`;
  }

  formTwo() {
    return `${this.upper({ dx: -21, dy: 0 })}
      <polyline class="red" points="195,425 228,425 298,533 690,533"/>
      <polyline class="red" points="298,553 693,553 762,446 792,446"/>
      ${this.title("交错翻起", 497, 653, 479, 724, 420, 537, 733)}`;
  }

  formThree() {
    return `${this.upper({ dx: 3, dy: -36, noRed: true, cm: false })}
      <polyline class="mg" points="222,203 258,203 300,272"/>
      <polyline class="red" points="300,272 320,310"/>
      <polyline class="mg" points="320,310 377,310"/>
      <polyline class="red" points="377,310 660,310"/>
      <polyline class="mg" points="660,310 718,310"/>
      <polyline class="red" points="718,310 740,272"/>
      <polyline class="mg" points="740,272 783,203 813,203"/>
      <polyline class="mg" points="222,389 258,389 318,495 377,495"/>
      <polyline class="mg" points="660,497 718,497 783,389 813,389"/>
      <polyline class="red" points="298,448 320,485 718,485 740,448"/>
      <path class="w" d="M260 295L290 270M322 502V520M378 502V520M322 510H378M700 482L725 440L742 448M715 490L742 448"/>
      ${this.gn(198, 320, "CMJ2")}${this.gn(771, 285, "CMJ1")}${this.gn(328, 536, "XWZ")}${this.gn(692, 468, "OWZ", -60)}
      ${this.title("均不翻起一", 553, 613, 502, 686, 444, 560, 696)}`;
  }

  formFour() {
    return `<rect class="w" x="236" y="115" width="497" height="210"/>
      <polyline class="red" points="246,185 246,123 720,123 720,185"/>
      <polyline class="red" points="246,220 246,284 720,284 720,220"/>
      <path class="dots" d="M252 125H718M252 277H718"/>
      <path class="w" d="M442 484V292H511V484M420 484H470L474 476L479 494L483 484H524"/>
      <path class="w" d="M212 115V325M204 115H226M204 325H226M755 123V190M745 123H768M745 190H768M755 220V288M745 220H768M745 288H768"/>
      <path class="w" d="M340 80H392M340 80V137M565 82H660M580 84L548 127M604 84L572 127M628 84L596 127M650 84L620 127"/>
      <path class="w" d="M361 208H402M361 208V290M540 265H617M556 265L522 282M580 265L546 282M604 265L570 282M548 292V325M538 292H558"/>
      <path class="w" d="M697 195L720 225M697 225L720 255M697 190V258"/>
      ${this.lb(265, 69, "横向面筋")}${this.gn(375, 69, "XMJ")}
      ${this.lb(548, 73, "纵向面筋")}${this.gn(665, 73, "YMJ")}
      ${this.lb(317, 197, "横向底筋")}${this.gn(430, 197, "XDJ")}
      ${this.lb(500, 254, "纵向底筋")}${this.gn(613, 254, "YDJ")}
      ${this.gn(194, 222, "h", -90)}${this.gn(782, 178, "UWZ", -90)}${this.gn(782, 276, "DWZ", -90)}
      ${this.gn(574, 330, "ZSC", -90)}${this.gn(690, 232, "CMJ", -90)}
      <text class="lb" x="664" y="226" transform="rotate(-90 664 226)">侧面筋</text>
      <polyline class="red" points="246,453 246,519 720,519 720,453"/>
      ${this.title("均不翻起二", 508, 603, 458, 685, 393, 522, 696)}`;
  }
}
customElements.define("cad-drawing", CadDrawing);
</script>
</body>
</html>
